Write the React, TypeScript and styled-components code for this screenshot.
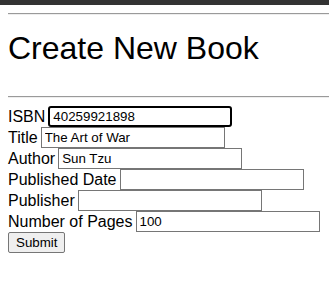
import * as React from 'react';
import styled, { createGlobalStyle } from 'styled-components';

const GlobalStyle = createGlobalStyle`
  body {
    margin: 0;
    background: #fff;
    font-family: 'Liberation Sans', Arial, sans-serif;
    color: #000;
  }
`;

const TopBar = styled.div`
  height: 5px;
  background: #333;
`;

const Page = styled.div`
  padding-left: 8px;
`;

const Rule = styled.hr`
  margin: 8px 0;
  border: 0;
  border-top: 1px solid #9a9a9a;
  border-bottom: 1px solid #eee;
`;

const Heading = styled.h1`
  font-size: 32px;
  font-weight: normal;
  line-height: 37px;
  margin: 15px 0 29px;
`;

const Form = styled.form`
  display: flex;
  flex-direction: column;
  align-items: flex-start;
`;

const Row = styled.div`
  display: flex;
  align-items: center;
  gap: 3px;
  height: 21px;
`;

const Label = styled.label`
  font-size: 16px;
  line-height: 18px;
`;

const Input = styled.input<{ $active?: boolean }>`
  box-sizing: border-box;
  width: 184px;
  height: 21px;
  padding: 1px 3px;
  font-family: 'Liberation Sans', Arial, sans-serif;
  font-size: 13.33px;
  color: #000;
  border: ${({ $active }) => ($active ? '2px solid #000' : '1px solid #767676')};
  border-radius: ${({ $active }) => ($active ? '3px' : '0')};
  outline: none;
  background: #fff;
`;

const SubmitButton = styled.button`
  box-sizing: border-box;
  height: 21px;
  padding: 1px 7px;
  font-family: 'Liberation Sans', Arial, sans-serif;
  font-size: 13.33px;
  background: #efefef;
  border: 1px solid #767676;
  border-radius: 2px;
  color: #000;
`;

const fields = [
  { name: 'isbn', label: 'ISBN', value: '40259921898', active: true },
  { name: 'title', label: 'Title', value: 'The Art of War' },
  { name: 'author', label: 'Author', value: 'Sun Tzu' },
  { name: 'publishedDate', label: 'Published Date', value: '' },
  { name: 'publisher', label: 'Publisher', value: '' },
  { name: 'pages', label: 'Number of Pages', value: '100' }
];

const App = () => (
  <>
    <GlobalStyle />
    <TopBar />
    <Page>
      <Rule />
      <Heading>Create New Book</Heading>
      <Rule />
      <Form onSubmit={e => e.preventDefault()}>
        {fields.map(f => (
          <Row key={f.name}>
            <Label htmlFor={f.name}>{f.label}</Label>
            <Input id={f.name} name={f.name} defaultValue={f.value} $active={f.active} />
          </Row>
        ))}
        <SubmitButton type="submit">Submit</SubmitButton>
      </Form>
    </Page>
  </>
);

export default App;
